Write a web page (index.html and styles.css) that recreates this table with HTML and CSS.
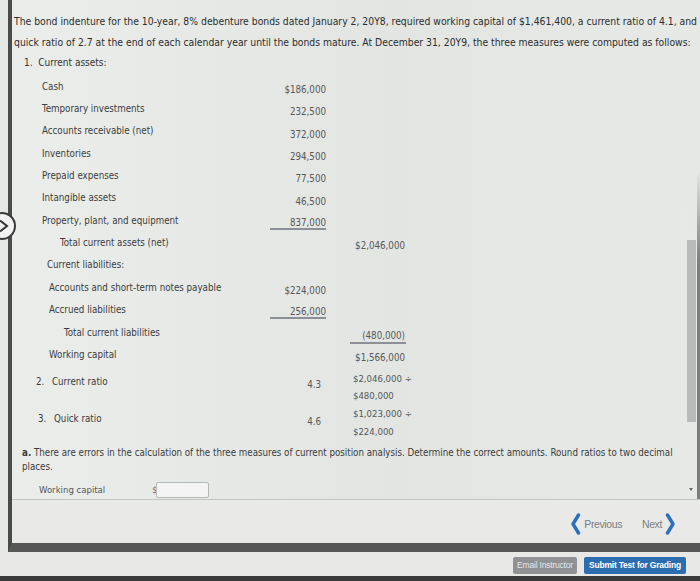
FILE: index.html
```html
<!DOCTYPE html>
<html>
<head>
<meta charset="utf-8">
<link rel="stylesheet" href="styles.css">
</head>
<body>
<div class="screen">
  <div class="panel">
    <div class="content">
      <div class="scroll-area">
        <p class="intro">The bond indenture for the 10-year, 8% debenture bonds dated January 2, 20Y8, required working capital of $1,461,400, a current ratio of 4.1, and<br>quick ratio of 2.7 at the end of each calendar year until the bonds mature. At December 31, 20Y9, the three measures were computed as follows:</p>
        <div class="item-title">1.&nbsp; Current assets:</div>
        <div class="sheet">
          <div class="row"><span class="lbl">Cash</span><span class="num">$186,000</span><span class="num2"></span></div>
          <div class="row"><span class="lbl">Temporary investments</span><span class="num">232,500</span><span class="num2"></span></div>
          <div class="row"><span class="lbl">Accounts receivable (net)</span><span class="num">372,000</span><span class="num2"></span></div>
          <div class="row"><span class="lbl">Inventories</span><span class="num">294,500</span><span class="num2"></span></div>
          <div class="row"><span class="lbl">Prepaid expenses</span><span class="num">77,500</span><span class="num2"></span></div>
          <div class="row"><span class="lbl">Intangible assets</span><span class="num">46,500</span><span class="num2"></span></div>
          <div class="row"><span class="lbl">Property, plant, and equipment</span><span class="num ruled">837,000</span><span class="num2"></span></div>
          <div class="row"><span class="lbl total">Total current assets (net)</span><span class="num"></span><span class="num2">$2,046,000</span></div>
          <div class="row"><span class="lbl sub">Current liabilities:</span><span class="num"></span><span class="num2"></span></div>
          <div class="row"><span class="lbl sub2">Accounts and short-term notes payable</span><span class="num">$224,000</span><span class="num2"></span></div>
          <div class="row"><span class="lbl sub2">Accrued liabilities</span><span class="num ruled">256,000</span><span class="num2"></span></div>
          <div class="row"><span class="lbl total2">Total current liabilities</span><span class="num"></span><span class="num2 ruled">(480,000)</span></div>
          <div class="row"><span class="lbl sub2">Working capital</span><span class="num"></span><span class="num2">$1,566,000</span></div>
          <div class="row ratio cr"><span class="lbl"><span class="n">2.</span>Current ratio</span><span class="num">4.3</span><span class="frac">$2,046,000 ÷<br>$480,000</span></div>
          <div class="row ratio qr"><span class="lbl"><span class="n">3.</span>Quick ratio</span><span class="num">4.6</span><span class="frac">$1,023,000 ÷<br>$224,000</span></div>
        </div>
        <p class="task"><b>a.</b> There are errors in the calculation of the three measures of current position analysis. Determine the correct amounts. Round ratios to two decimal<br>places.</p>
        <div class="answer"><span class="alabel">Working capital</span><span class="dollar">$</span><span class="field"></span></div>
      </div>
      <div class="scrollbar"><div class="thumb"></div><div class="arrow"></div></div>
    </div>
    <div class="nav">
      <span class="navbtn">
        <svg width="11" height="22" viewBox="0 0 11 22"><path d="M8.5 2 L3 11 L8.5 20" fill="none" stroke="#2b6fc0" stroke-width="3.4" stroke-linejoin="round" stroke-linecap="round"/></svg>
        <span class="navtxt">Previous</span>
      </span>
      <span class="navbtn next">
        <span class="navtxt">Next</span>
        <svg width="11" height="22" viewBox="0 0 11 22"><path d="M2.5 2 L8 11 L2.5 20" fill="none" stroke="#2b6fc0" stroke-width="3.4" stroke-linejoin="round" stroke-linecap="round"/></svg>
      </span>
    </div>
  </div>
  <div class="footer">
    <span class="btn gray">Email Instructor</span>
    <span class="btn blue">Submit Test for Grading</span>
  </div>
  <div class="sidetab"><svg width="12" height="14" viewBox="0 0 12 14"><path d="M2 1.5 L9 7 L2 12.5" fill="none" stroke="#333" stroke-width="2"/></svg></div>
</div>
</body>
</html>
```
FILE: styles.css
```css
html, body {
  margin: 0;
  padding: 0;
}
body {
  width: 700px;
  height: 581px;
  overflow: hidden;
  background: #3a3a3a;
  font-family: "DejaVu Sans Condensed", "Liberation Sans", Arial, sans-serif;
  font-stretch: condensed;
  color: #3a3c3c;
}
.screen {
  position: relative;
  width: 700px;
  height: 581px;
  display: flex;
  flex-direction: column;
  background: #e5e7e4;
}
.panel {
  margin-left: 8px;
  border-left: 4px solid #4a4a4a;
  border-bottom: 9px solid #575757;
  display: flex;
  flex-direction: column;
  background: linear-gradient(90deg, #ebedeb 0%, #e2e5e2 55%, #e7e9e6 100%);
}
.content {
  height: 500px;
  display: flex;
  border-bottom: 1px solid #c3c5c2;
  box-sizing: border-box;
}
.scroll-area {
  flex: 1;
  min-width: 0;
  padding: 11px 0 0 2px;
  position: relative;
  z-index: 1;
}
.intro {
  margin: 0;
  font-size: 10.3px;
  line-height: 21px;
  color: #2b2d2e;
  white-space: nowrap;
}
.item-title {
  margin: 0 0 0 10px;
  font-size: 10px;
  line-height: 20px;
  color: #333;
}
.sheet {
  margin-left: 26px;
  margin-top: 2px;
}
.row {
  display: grid;
  grid-template-columns: 230px 56px 80px;
  height: 22.33px;
  align-items: center;
  font-size: 9.7px;
}
.lbl {
  color: #3a3c3c;
  white-space: nowrap;
  padding-left: 2px;
}
.lbl.total { padding-left: 20px; }
.lbl.total2 { padding-left: 24px; }
.lbl.sub { padding-left: 7px; }
.lbl.sub2 { padding-left: 9px; }
.num, .num2 {
  text-align: right;
  color: #555858;
  padding-top: 8px;
  align-self: stretch;
  box-sizing: border-box;
  line-height: 14px;
}
.num2 { padding-right: 1px; }
.ruled {
  border-bottom: 2px solid #8b9096;
  height: 15px;
  padding-top: 1px;
  margin-top: 6px;
  align-self: start;
}
.num2.ruled {
  margin-top: 8px;
  padding-top: 0;
  margin-left: 24px;
}
.ratio {
  align-items: start;
  height: 36px;
}
.ratio .lbl { padding-left: 0; margin-left: -4px; line-height: 14px; padding-top: 10px; }
.ratio .n { display: inline-block; width: 16px; }
.ratio .num { padding-top: 13px; padding-right: 5px; align-self: start; }
.frac {
  color: #555858;
  font-size: 9.5px;
  line-height: 17px;
  padding-top: 5px;
  padding-left: 27px;
  white-space: nowrap;
}
.qr { height: 38px; }
.qr .lbl { padding-top: 11px; margin-left: -2px; }
.qr .num { padding-top: 14px; }
.qr .frac { padding-top: 4px; line-height: 18px; }
.task {
  margin: 7px 0 0 8px;
  font-size: 9.7px;
  line-height: 13.5px;
  color: #3a3c3c;
  white-space: nowrap;
}
.task b { font-weight: bold; }
.answer {
  display: flex;
  align-items: center;
  height: 17px;
  margin: 8px 0 0 25px;
  font-size: 9.5px;
}
.alabel {
  width: 113px;
  color: #555;
}
.dollar {
  color: #777;
  width: 4px;
}
.field {
  width: 51px;
  height: 14px;
  border: 1px solid #b5b8b8;
  border-radius: 2px;
  background: #f3f4f3;
}
.scrollbar {
  width: 14px;
  flex-shrink: 0;
  display: flex;
  flex-direction: column;
  align-items: flex-start;
  background:
    linear-gradient(to bottom, #e6e8e5 0, #e6e8e5 170px, rgba(230,232,229,0) 260px),
    linear-gradient(to right, transparent 11px, #7d7f7e 11px);
}
.thumb {
  margin-top: 240px;
  margin-left: 1px;
  width: 9px;
  height: 182px;
  background: #b9bbba;
}
.arrow {
  margin-top: 66px;
  margin-left: 3px;
  width: 0;
  height: 0;
  border-left: 2px solid transparent;
  border-right: 2px solid transparent;
  border-top: 3px solid #666;
}
.nav {
  height: 39px;
  display: flex;
  justify-content: flex-end;
  align-items: center;
  padding-right: 24px;
  gap: 20px;
  padding-top: 4px;
  background: #e9eae8;
}
.navbtn {
  display: flex;
  align-items: center;
  gap: 3px;
}
.navtxt {
  font-size: 10.5px;
  color: #7a7d80;
  font-family: "Liberation Sans", Arial, sans-serif;
  letter-spacing: -0.4px;
}
.footer {
  height: 27px;
  border-bottom: 5px solid #3a3a3a;
  background: #e8e9e7;
  display: flex;
  justify-content: flex-end;
  align-items: center;
  gap: 7px;
  padding-right: 14px;
  padding-top: 2px;
  box-sizing: content-box;
}
.btn {
  font-family: "Liberation Sans", Arial, sans-serif;
  font-size: 8.5px;
  line-height: 17px;
  height: 17px;
  color: #fff;
  border-radius: 2px;
  padding: 0 4px;
  letter-spacing: -0.2px;
}
.btn.gray { background: #8f9192; color: #e6e6e6; }
.btn.blue { background: #2c6db0; font-weight: bold; padding: 0 5px; }
.sidetab {
  position: absolute;
  left: -12px;
  top: 212px;
  width: 28px;
  height: 28px;
  border: 2px solid #3b3b3b;
  border-radius: 50%;
  background: #f0f1f0;
  display: flex;
  align-items: center;
  justify-content: flex-end;
  padding-right: 4px;
  box-sizing: border-box;
}
```
